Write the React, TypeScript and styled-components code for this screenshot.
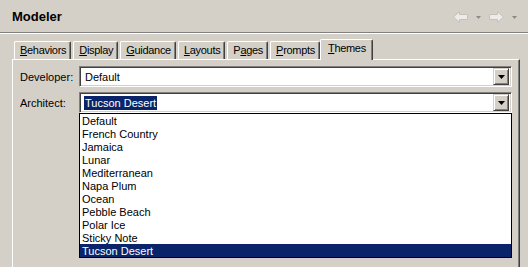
import styled, { createGlobalStyle } from 'styled-components';

const Global = createGlobalStyle`
  html, body {
    margin: 0;
    padding: 0;
    background: #d4d0c8;
  }
  body {
    font-family: 'Liberation Sans', Arial, sans-serif;
    font-size: 11px;
    color: #000;
  }
`;

const Window = styled.div`
  width: 528px;
  height: 267px;
  overflow: hidden;
  display: flex;
  flex-direction: column;
  background: #d4d0c8;
`;

const Header = styled.div`
  height: 32px;
  display: flex;
  align-items: center;
  justify-content: space-between;
  padding: 0 11px 0 12px;
  box-sizing: border-box;
`;

const Title = styled.div`
  font-size: 13px;
  font-weight: bold;
  padding-top: 1px;
`;

const Nav = styled.div`
  display: flex;
  align-items: center;
  gap: 8px;
  padding-top: 1px;
`;

const Separator = styled.div`
  border-top: 1px solid #808080;
  border-bottom: 1px solid #ffffff;
`;

const TabRow = styled.div`
  height: 25px;
  display: flex;
  align-items: flex-end;
  padding-left: 14px;
  gap: 2px;
  position: relative;
  z-index: 1;
`;

const Tab = styled.div<{ $active?: boolean }>`
  box-sizing: border-box;
  height: ${(p) => (p.$active ? '21px' : '18px')};
  margin: ${(p) => (p.$active ? '0 -2px -1px -2px' : '0')};
  padding: ${(p) => (p.$active ? '2px 6px 0 7px' : '2px 4px 0 5px')};
  background: #d4d0c8;
  border-left: 1px solid #ffffff;
  border-top: 1px solid #ffffff;
  border-right: 1px solid #404040;
  box-shadow: inset -1px 0 0 #808080;
  border-top-left-radius: 2px;
  border-top-right-radius: 2px;
  line-height: 13px;
  letter-spacing: -0.3px;
  white-space: nowrap;
  u {
    text-decoration: underline;
    text-underline-offset: 1px;
  }
`;

const Panel = styled.div`
  flex: 1;
  margin: 0 8px 0 12px;
  border-left: 1px solid #ffffff;
  border-top: 1px solid #ffffff;
  border-right: 1px solid #404040;
  box-shadow: inset -1px 0 0 #808080;
  padding: 6px 7px 0 7px;
  display: grid;
  grid-template-columns: 59px 1fr;
  grid-auto-rows: 21px;
  row-gap: 5px;
  align-content: start;
`;

const Label = styled.div`
  display: flex;
  align-items: center;
  padding-top: 1px;
`;

const Combo = styled.div`
  position: relative;
  box-sizing: border-box;
  height: 21px;
  background: #ffffff;
  border-top: 1px solid #808080;
  border-left: 1px solid #808080;
  border-right: 1px solid #ffffff;
  border-bottom: 1px solid #ffffff;
  box-shadow: inset 1px 1px 0 #404040, inset -1px -1px 0 #d4d0c8;
  display: flex;
  align-items: center;
  padding: 0 2px 0 4px;
`;

const Value = styled.span<{ $selected?: boolean }>`
  flex: 1;
  span {
    padding: 0 1px;
    background: ${(p) => (p.$selected ? '#0a246a' : 'transparent')};
    color: ${(p) => (p.$selected ? '#ffffff' : '#000')};
    line-height: 14px;
    display: inline-block;
  }
`;

const DropButton = styled.div`
  box-sizing: border-box;
  width: 16px;
  height: 17px;
  background: #d4d0c8;
  border-top: 1px solid #d4d0c8;
  border-left: 1px solid #d4d0c8;
  border-right: 1px solid #404040;
  border-bottom: 1px solid #404040;
  box-shadow: inset 1px 1px 0 #ffffff, inset -1px -1px 0 #808080;
  display: flex;
  align-items: center;
  justify-content: center;
`;

const List = styled.div`
  position: absolute;
  left: -1px;
  top: 20px;
  width: 433px;
  box-sizing: border-box;
  border: 1px solid #000000;
  background: #ffffff;
  z-index: 2;
`;

const Item = styled.div<{ $selected?: boolean }>`
  height: 13px;
  line-height: 14px;
  padding-left: 2px;
  background: ${(p) => (p.$selected ? '#0a246a' : '#ffffff')};
  color: ${(p) => (p.$selected ? '#ffffff' : '#000000')};
`;

const Arrow = ({ dir }: { dir: 'left' | 'right' }) => (
  <svg width="15" height="12" viewBox="0 0 15 12">
    <g transform={dir === 'right' ? 'translate(15,0) scale(-1,1)' : undefined}>
      <polygon
        points="0.5,6 6.5,0.5 6.5,3.5 14.5,3.5 14.5,8.5 6.5,8.5 6.5,11.5"
        fill="#ecebe8"
        stroke="#c4c1ba"
      />
    </g>
  </svg>
);

const SmallCaret = () => (
  <svg width="5" height="3" viewBox="0 0 5 3" style={{ marginTop: 2 }}>
    <polygon points="0,0 5,0 2.5,3" fill="#8c8a85" />
  </svg>
);

const DownTriangle = () => (
  <svg width="7" height="4" viewBox="0 0 7 4">
    <polygon points="0,0 7,0 3.5,4" fill="#000" />
  </svg>
);

const themes = [
  'Default',
  'French Country',
  'Jamaica',
  'Lunar',
  'Mediterranean',
  'Napa Plum',
  'Ocean',
  'Pebble Beach',
  'Polar Ice',
  'Sticky Note',
  'Tucson Desert',
];

const tabs: [string, string, string][] = [
  ['', 'B', 'ehaviors'],
  ['', 'D', 'isplay'],
  ['', 'G', 'uidance'],
  ['', 'L', 'ayouts'],
  ['P', 'a', 'ges'],
  ['', 'P', 'rompts'],
  ['', 'T', 'hemes'],
];

export default function App() {
  return (
    <Window>
      <Global />
      <Header>
        <Title>Modeler</Title>
        <Nav>
          <Arrow dir="left" />
          <SmallCaret />
          <Arrow dir="right" />
          <SmallCaret />
        </Nav>
      </Header>
      <Separator />
      <TabRow>
        {tabs.map(([a, u, b]) => (
          <Tab key={a + u + b} $active={u === 'T'}>
            {a}
            <u>{u}</u>
            {b}
          </Tab>
        ))}
      </TabRow>
      <Panel>
        <Label>Developer:</Label>
        <Combo>
          <Value>
            <span>Default</span>
          </Value>
          <DropButton>
            <DownTriangle />
          </DropButton>
        </Combo>
        <Label>Architect:</Label>
        <Combo>
          <Value $selected>
            <span>Tucson Desert</span>
          </Value>
          <DropButton>
            <DownTriangle />
          </DropButton>
          <List>
            {themes.map((t) => (
              <Item key={t} $selected={t === 'Tucson Desert'}>
                {t}
              </Item>
            ))}
          </List>
        </Combo>
      </Panel>
    </Window>
  );
}
